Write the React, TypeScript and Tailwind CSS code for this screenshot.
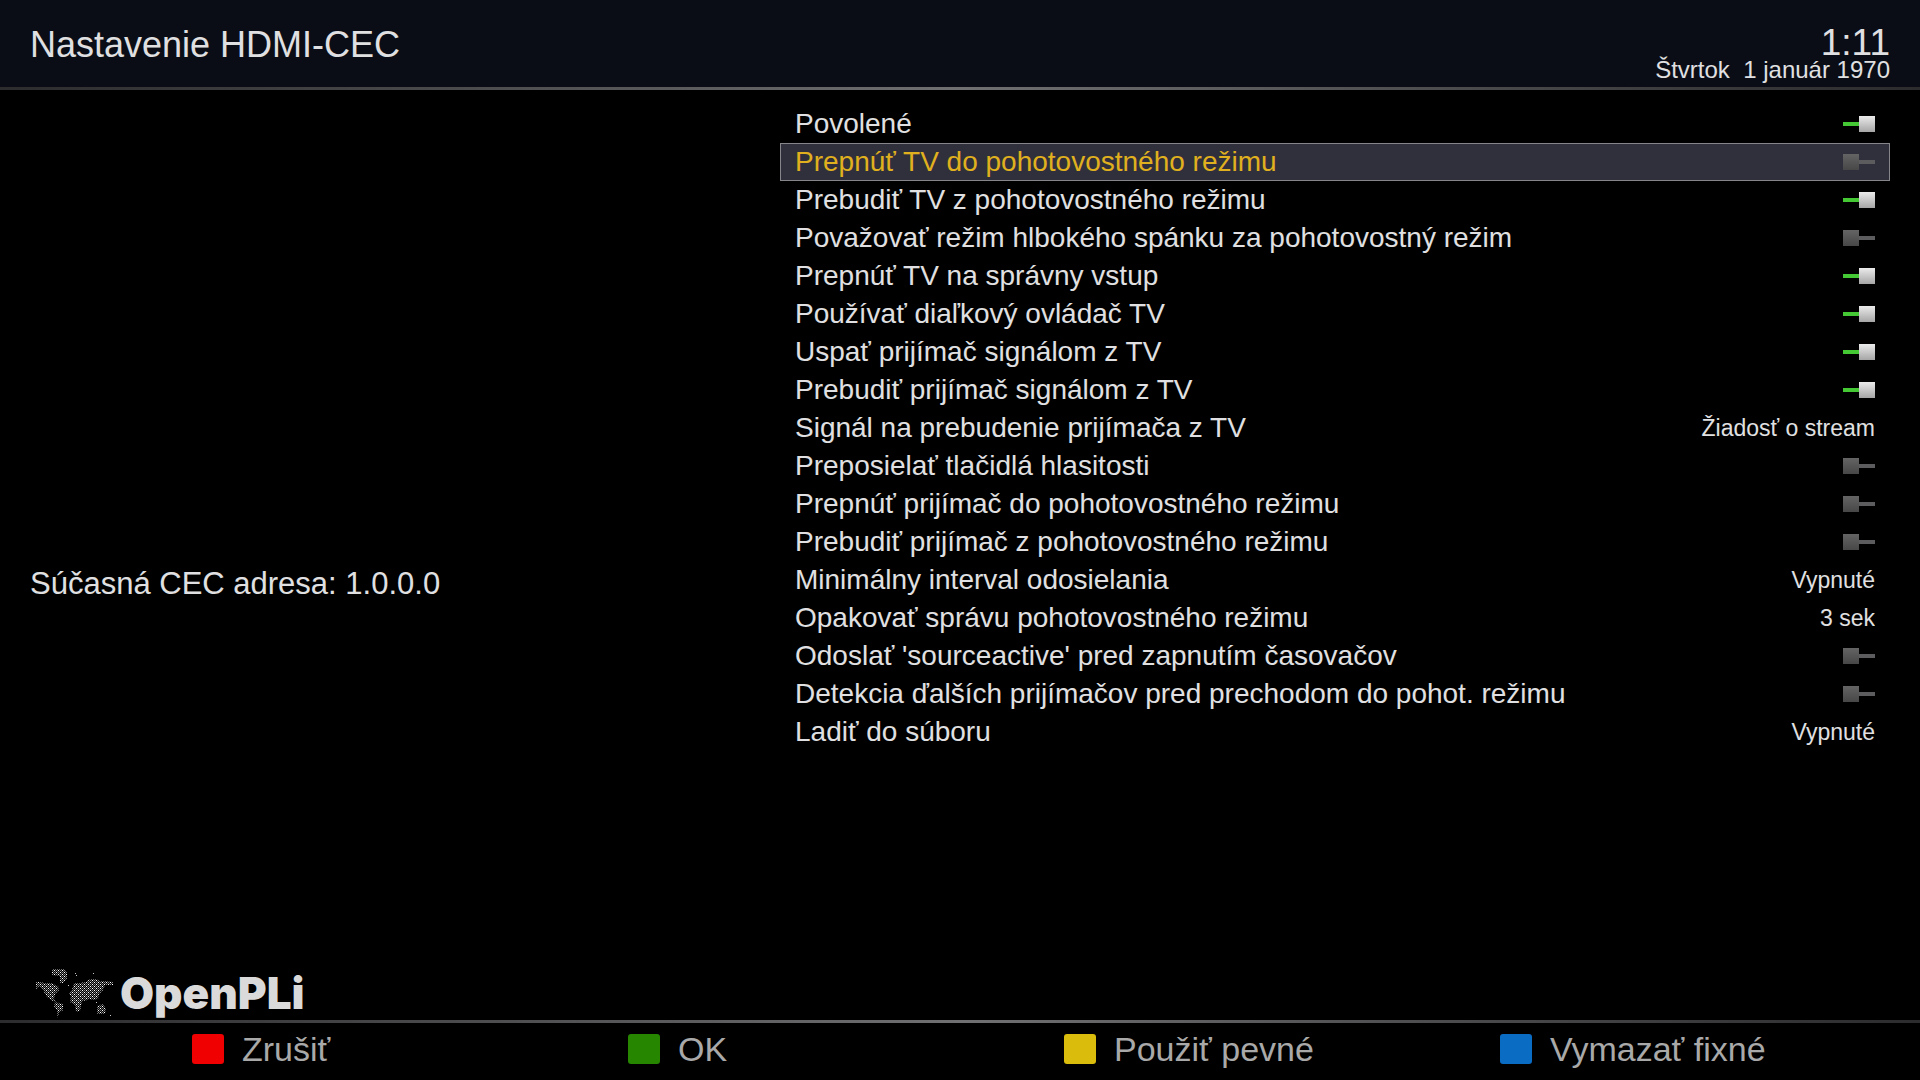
import {useState} from "react";

type Setting = {
    label: string
    on?: boolean
    value?: string
}

const settings: Setting[] = [
    {label: "Povolené", on: true},
    {label: "Prepnúť TV do pohotovostného režimu", on: false},
    {label: "Prebudiť TV z pohotovostného režimu", on: true},
    {label: "Považovať režim hlbokého spánku za pohotovostný režim", on: false},
    {label: "Prepnúť TV na správny vstup", on: true},
    {label: "Používať diaľkový ovládač TV", on: true},
    {label: "Uspať prijímač signálom z TV", on: true},
    {label: "Prebudiť prijímač signálom z TV", on: true},
    {label: "Signál na prebudenie prijímača z TV", value: "Žiadosť o stream"},
    {label: "Preposielať tlačidlá hlasitosti", on: false},
    {label: "Prepnúť prijímač do pohotovostného režimu", on: false},
    {label: "Prebudiť prijímač z pohotovostného režimu", on: false},
    {label: "Minimálny interval odosielania", value: "Vypnuté"},
    {label: "Opakovať správu pohotovostného režimu", value: "3 sek"},
    {label: "Odoslať 'sourceactive' pred zapnutím časovačov", on: false},
    {label: "Detekcia ďalších prijímačov pred prechodom do pohot. režimu", on: false},
    {label: "Ladiť do súboru", value: "Vypnuté"},
]

const keys = [
    {label: "Zrušiť", color: "bg-[#f00000]"},
    {label: "OK", color: "bg-[#268600]"},
    {label: "Použiť pevné", color: "bg-[#d9bc0c]"},
    {label: "Vymazať fixné", color: "bg-[#0b6cc4]"},
]

function Divider() {
    return <div className="h-[3px] bg-linear-to-r from-[#2c2c2e] via-[#707072] to-[#2c2c2e]"/>
}

function WorldMap() {
    return (
        <svg className="w-20 h-[50px]" viewBox="0 0 80 50" aria-hidden="true">
            <defs>
                <pattern id="dots" width="4" height="4" patternUnits="userSpaceOnUse">
                    <rect x="0" y="0" width="1" height="1" fill="#ffffff"/>
                    <rect x="2" y="2" width="1" height="1" fill="#ffffff"/>
                    <rect x="2" y="0" width="1" height="1" fill="#8a8a8a"/>
                    <rect x="0" y="2" width="1" height="1" fill="#8a8a8a"/>
                    <rect x="1" y="1" width="1" height="1" fill="#6a6a6a"/>
                    <rect x="3" y="1" width="1" height="1" fill="#6a6a6a"/>
                    <rect x="1" y="3" width="1" height="1" fill="#6a6a6a"/>
                    <rect x="3" y="3" width="1" height="1" fill="#6a6a6a"/>
                </pattern>
            </defs>
            <g fill="url(#dots)">
                <path d="M0 14h4l4 1h8l3 2 3 1 1 4-4 4-1 5 3 3-4-1-6-4-4-7-4-4-3 3z"/>
                <path d="M16 1h12l3 3v6l-4 5h-3v-7l-8-1z"/>
                <path d="M19 34l8 2v6l-4 3-2 5v-8l-3-4z"/>
                <path d="M38 15h6l6-1 4-3h6l4 2h6l7 1v3h-8l-2 5-4 4-1 5-5 1-4-1-4 2-5-4h-9l-2-4 3-3z"/>
                <path d="M35 29h8l4 3-2 5-1 6-4 1-1-7-5-3z"/>
                <path d="M61 38l6-2 3 5-1 5h-8z"/>
            </g>
            <g fill="#c8c8c8">
                <path d="M39 5h1v1h-1zM40 7h1v1h-1zM57 5h1v1h-1zM32 17h1v1h-1zM74 47h1v1h-1zM60 34h1v1h-1z"/>
            </g>
        </svg>
    )
}

function Row({setting, selected, onSelect}: { setting: Setting, selected: boolean, onSelect: () => void }) {
    return (
        <label onClick={onSelect}
               className={selected
                   ? "flex items-center justify-between h-[38px] px-[14px] border border-[#85858a] bg-[#2f303c] text-[#e0b01e]"
                   : "flex items-center justify-between h-[38px] px-[14px] border border-transparent"}>
            <span className="text-[28px] leading-8">{setting.label}</span>
            {setting.value !== undefined ? (
                <select className="appearance-none text-right [text-align-last:right] text-[23px] leading-7 outline-none">
                    <option>{setting.value}</option>
                </select>
            ) : (
                <input type="checkbox" defaultChecked={setting.on}
                       className="appearance-none flex flex-row-reverse checked:flex-row items-center w-8 h-4 outline-none before:w-4 before:h-1 before:bg-[#5c5c5e] checked:before:bg-[#44c834] after:size-4 after:bg-linear-to-b after:from-[#646464] after:to-[#474747] checked:after:from-[#ececec] checked:after:to-[#a6a6a6]"/>
            )}
        </label>
    )
}

export default function App() {
    const [selected, setSelected] = useState<number>(1)

    return (
        <div className="min-h-screen flex flex-col overflow-x-hidden bg-black text-[#e0e0e2] font-['Liberation_Sans',Arial,sans-serif]">
            <header className="flex justify-between h-[87px] px-[30px] bg-[#0a0d15]">
                <h1 className="pt-[25px] text-[36px] leading-10">Nastavenie HDMI-CEC</h1>
                <div className="pt-[26px] text-right">
                    <div className="text-[37px] leading-[34px]">1:11</div>
                    <div className="text-[24px] leading-5 whitespace-pre">Štvrtok  1 január 1970</div>
                </div>
            </header>
            <Divider/>

            <main className="flex-1 flex pt-[15px] pl-[30px] pr-[30px]">
                <section className="w-[750px] flex flex-col justify-between">
                    <p className="pt-[461px] text-[31px] leading-9">Súčasná CEC adresa: 1.0.0.0</p>
                    <div className="flex items-center gap-1 pb-[2px] pl-[6px]">
                        <WorldMap/>
                        <span className="font-[family-name:Inter,sans-serif] font-black text-[44px] leading-[50px] text-[#dadada]">OpenPLi</span>
                    </div>
                </section>
                <section className="flex-1">
                    {settings.map((setting, i) => (
                        <Row key={setting.label} setting={setting} selected={i === selected}
                             onSelect={() => setSelected(i)}/>
                    ))}
                </section>
            </main>

            <Divider/>
            <footer className="grid grid-cols-4 h-[57px] pl-[192px] pb-[6px] -mr-4 text-[#a9a9a9]">
                {keys.map((key) => (
                    <button key={key.label} className="flex items-center gap-[18px] text-[34px] leading-10">
                        <span className={`w-8 h-[30px] rounded-[3px] ${key.color}`}/>
                        {key.label}
                    </button>
                ))}
            </footer>
        </div>
    )
}
